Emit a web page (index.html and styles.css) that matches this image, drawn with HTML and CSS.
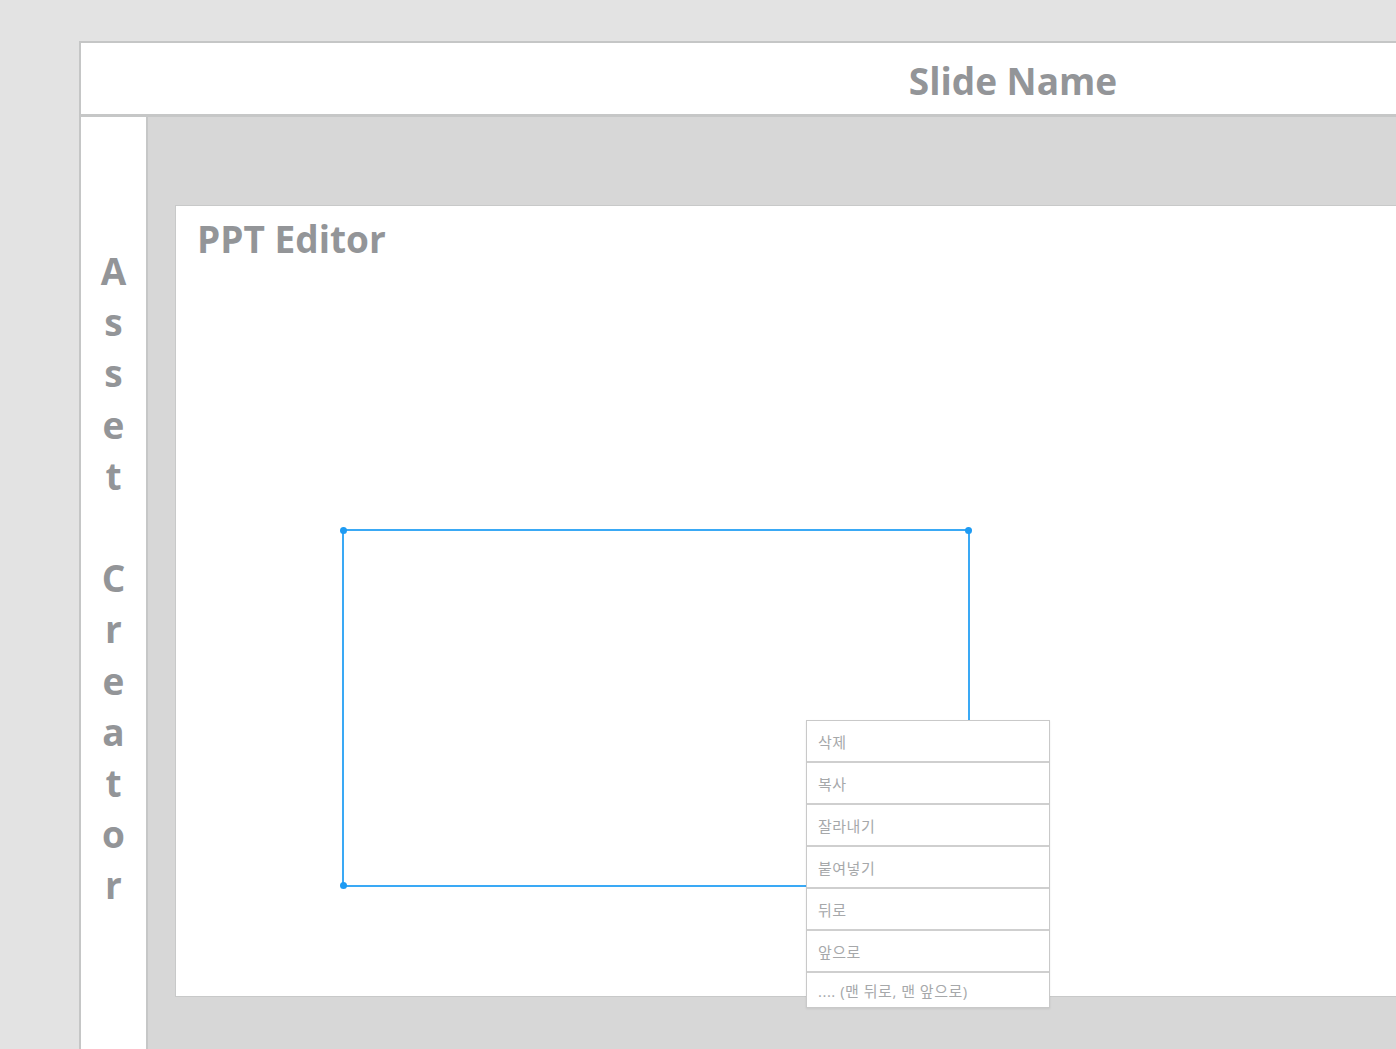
FILE: index.html
```html
<!DOCTYPE html>
<html lang="ko">
<head>
<meta charset="utf-8">
<title>PPT Editor</title>
<link rel="stylesheet" href="styles.css">
</head>
<body>
<div class="frame">
  <header class="header">
    <h1 class="slide-name">Slide Name</h1>
  </header>
  <div class="main">
    <aside class="sidebar">
      <div class="vertical-title">
        <span>A</span><span>s</span><span>s</span><span>e</span><span>t</span><span>&nbsp;</span><span>C</span><span>r</span><span>e</span><span>a</span><span>t</span><span>o</span><span>r</span>
      </div>
    </aside>
    <section class="workspace">
      <div class="editor">
        <h2 class="editor-title">PPT Editor</h2>
        <div class="selection">
          <span class="handle tl"></span>
          <span class="handle tr"></span>
          <span class="handle bl"></span>
          <span class="handle br"></span>
        </div>
        <ul class="context-menu">
          <li>삭제</li>
          <li>복사</li>
          <li>잘라내기</li>
          <li>붙여넣기</li>
          <li>뒤로</li>
          <li>앞으로</li>
          <li class="more">.... (맨 뒤로, 맨 앞으로)</li>
        </ul>
      </div>
    </section>
  </div>
</div>
</body>
</html>
```

FILE: styles.css
```css
html, body {
  margin: 0;
  padding: 0;
  height: 100%;
}
body {
  background: #e3e3e3;
  overflow: hidden;
  font-family: "Open Sans", "Noto Sans", "Noto Sans CJK KR", sans-serif;
}
.frame {
  margin: 41px 0 0 79px;
  width: 1864px;
  border: 2px solid #c5c6c6;
  border-right: none;
  border-bottom: none;
  background: #ffffff;
  height: 1100px;
  display: flex;
  flex-direction: column;
}
.header {
  height: 71px;
  border-bottom: 3px solid #c6c7c7;
  display: flex;
  align-items: center;
  justify-content: center;
  flex-shrink: 0;
}
.slide-name {
  margin: 0;
  font-size: 37px;
  font-weight: 700;
  color: #939598;
  padding-top: 4px;
}
.main {
  display: flex;
  flex: 1;
}
.sidebar {
  width: 65px;
  border-right: 2px solid #c6c7c7;
  background: #ffffff;
  flex-shrink: 0;
}
.vertical-title {
  display: flex;
  flex-direction: column;
  align-items: center;
  padding-top: 128px;
  font-size: 37px;
  font-weight: 700;
  line-height: 51.2px;
  color: #939598;
}
.workspace {
  flex: 1;
  background: #d7d7d7;
  padding: 88px 0 0 27px;
}
.editor {
  position: relative;
  width: 1800px;
  height: 790px;
  background: #ffffff;
  border: 1px solid #c8c9c9;
}
.editor-title {
  margin: 0;
  padding: 7px 0 0 21px;
  font-size: 37px;
  font-weight: 700;
  color: #939598;
}
.selection {
  position: absolute;
  left: 166px;
  top: 323px;
  width: 628px;
  height: 358px;
  border: 2px solid #3aa9f5;
  box-sizing: border-box;
}
.handle {
  position: absolute;
  width: 7px;
  height: 7px;
  border-radius: 50%;
  background: #1e9bf3;
}
.handle.tl { left: -4px; top: -4px; }
.handle.tr { right: -4px; top: -4px; }
.handle.bl { left: -4px; bottom: -4px; }
.handle.br { right: -4px; bottom: -4px; }
.context-menu {
  position: absolute;
  left: 630px;
  top: 514px;
  width: 242px;
  margin: 0;
  padding: 0;
  list-style: none;
  background: #ffffff;
  border: 1px solid #c9c9c9;
  box-shadow: 0 1px 2px rgba(0,0,0,0.08);
}
.context-menu li {
  height: 40px;
  border-bottom: 2px solid #cfcfcf;
  padding-left: 11px;
  display: flex;
  align-items: center;
  font-size: 15px;
  letter-spacing: 0.5px;
  color: #a6a8aa;
}
.context-menu li.more {
  height: 34px;
  border-bottom: none;
}
```
